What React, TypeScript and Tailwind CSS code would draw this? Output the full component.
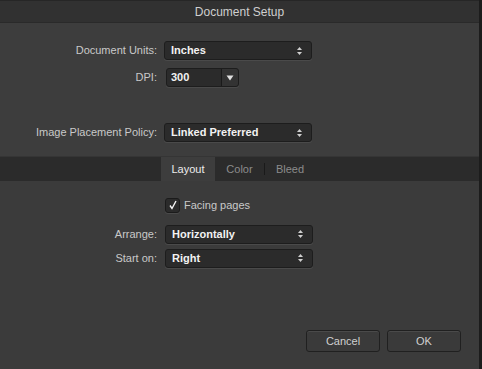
const font = { fontFamily: '"Liberation Sans", Arial, sans-serif' };

const Arrows = () => (
  <svg width="7" height="10" viewBox="0 0 7 10" className="ml-auto mr-[8px]">
    <path d="M3.5 1 L6 4 L1 4 Z" fill="#d0d0d0" />
    <path d="M1 6 L6 6 L3.5 9 Z" fill="#d0d0d0" />
  </svg>
);

const Select = ({ value, className = '' }: { value: string; className?: string }) => (
  <div
    className={`h-[19px] w-[148px] flex items-center rounded-[3px] bg-[#2b2b2b] border border-[#1d1d1d] shadow-[0_1px_0_#4a4a4a] ${className}`}
  >
    <span className="pl-[6px] text-[11px] font-bold text-[#f2f2f2]">{value}</span>
    <Arrows />
  </div>
);

const Row = ({ label, children, className = '' }: { label: string; children: React.ReactNode; className?: string }) => (
  <div className={`flex items-center ${className}`}>
    <div className="w-[157px] pr-[0px] text-right text-[11px] text-[#c9c9c9]">{label}</div>
    {children}
  </div>
);

export default function App() {
  return (
    <div style={font} className="w-[482px] h-[369px] bg-[#3d3d3d] flex flex-col border-r-[3px] border-[#1c1c1c] overflow-hidden">
      <div className="h-[23px] shrink-0 bg-[#313131] border-t border-[#262626] border-b border-b-[#2a2a2a] flex items-center justify-center text-[12px] text-[#cfcfcf]">
        Document Setup
      </div>

      <Row label="Document Units:" className="mt-[18px]">
        <Select value="Inches" className="ml-[7px]" />
      </Row>
      <Row label="DPI:" className="mt-[8px]">
        <div className="ml-[9px] h-[19px] w-[73px] flex rounded-[3px] bg-[#2b2b2b] border border-[#1d1d1d] shadow-[0_1px_0_#4a4a4a]">
          <span className="flex-1 flex items-center pl-[4px] text-[11px] font-bold text-[#f2f2f2]">300</span>
          <div className="w-[17px] border-l border-[#1a1a1a] bg-[#333333] flex items-center justify-center rounded-r-[3px]">
            <svg width="8" height="6" viewBox="0 0 8 6">
              <path d="M0.5 0.5 L7.5 0.5 L4 5.5 Z" fill="#e0e0e0" />
            </svg>
          </div>
        </div>
      </Row>
      <Row label="Image Placement Policy:" className="mt-[36px]">
        <Select value="Linked Preferred" className="ml-[7px]" />
      </Row>

      <div className="mt-[14px] h-[25px] shrink-0 bg-[#2b2b2b] border-t border-[#353535] flex items-end">
        <div className="ml-[161px] h-[24px] w-[54px] bg-[#3d3d3d] flex items-center justify-center text-[11px] text-[#ececec]">
          Layout
        </div>
        <div className="h-[24px] w-[49px] flex items-center justify-center text-[11px] text-[#8c8c8c]">Color</div>
        <div className="h-[12px] mb-[6px] w-px bg-[#1a1a1a]" />
        <div className="h-[24px] w-[50px] flex items-center justify-center text-[11px] text-[#8c8c8c]">Bleed</div>
      </div>

      <div className="flex-1 bg-[#3b3b3b] flex flex-col">
        <div className="mt-[16px] ml-[165px] flex items-center">
          <div className="w-[15px] h-[15px] rounded-[3px] bg-[#2b2b2b] border border-[#1b1b1b] shadow-[0_1px_0_#4a4a4a] flex items-center justify-center">
            <svg width="10" height="10" viewBox="0 0 10 10">
              <path d="M2 5.5 L4 8.5 L8 1" stroke="#f5f5f5" strokeWidth="1.4" fill="none" />
            </svg>
          </div>
          <span className="ml-[4px] text-[11px] text-[#c9c9c9]">Facing pages</span>
        </div>
        <Row label="Arrange:" className="mt-[11px]">
          <Select value="Horizontally" className="ml-[8px]" />
        </Row>
        <Row label="Start on:" className="mt-[5px]">
          <Select value="Right" className="ml-[8px]" />
        </Row>

        <div className="mt-auto mb-[17px] flex justify-end gap-[7px] pr-[18px]">
          <button className="h-[22px] w-[74px] rounded-[3px] bg-[#3a3a3a] border border-[#202020] shadow-[inset_0_1px_0_#4a4a4a] text-[11px] text-[#d0d0d0]">
            Cancel
          </button>
          <button className="h-[22px] w-[74px] rounded-[3px] bg-[#3a3a3a] border border-[#202020] shadow-[inset_0_1px_0_#4a4a4a] text-[11px] text-[#d0d0d0]">
            OK
          </button>
        </div>
      </div>
    </div>
  );
}
